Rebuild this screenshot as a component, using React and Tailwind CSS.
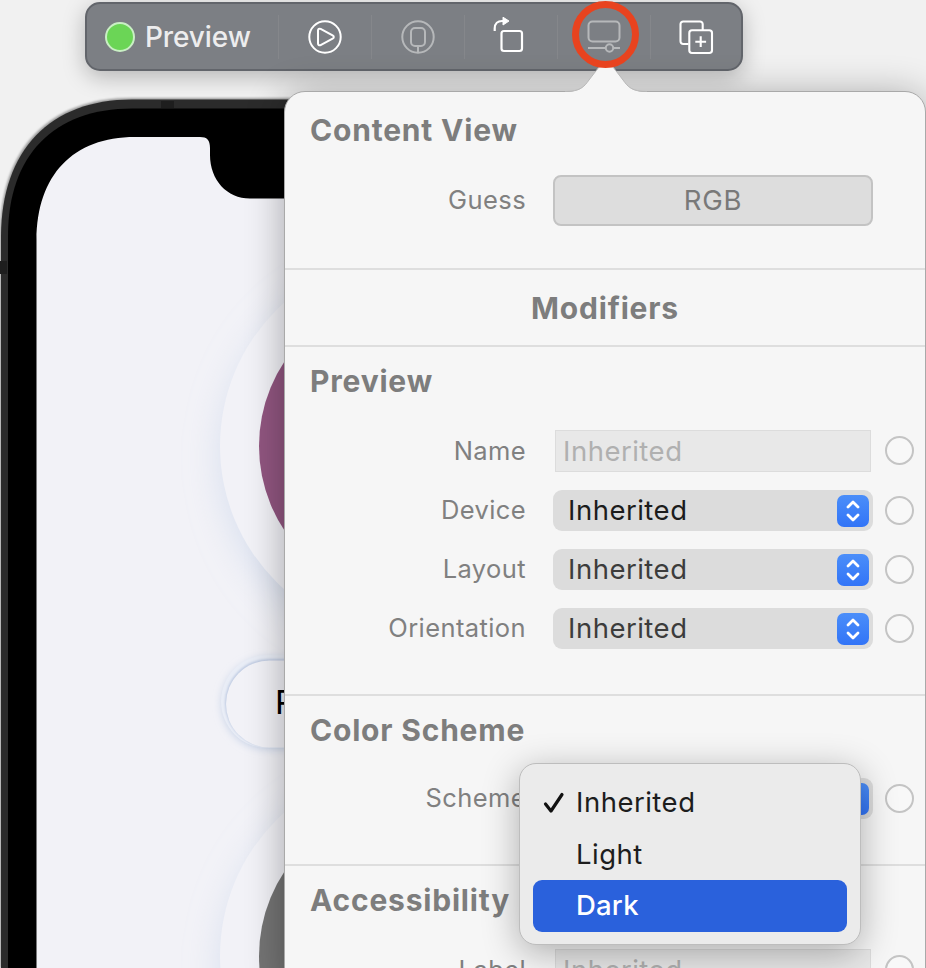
import React from "react";

function Phone() {
  return (
    <svg className="absolute inset-0" width="926" height="968" viewBox="0 0 926 968" fill="none">
      <defs>
        <filter id="soft" x="-30%" y="-30%" width="160%" height="160%">
          <feGaussianBlur stdDeviation="18" />
        </filter>
        <filter id="edge" x="-30%" y="-30%" width="160%" height="160%">
          <feGaussianBlur stdDeviation="4" />
        </filter>
        <filter id="hair" x="-10%" y="-10%" width="120%" height="120%">
          <feGaussianBlur stdDeviation="1" />
        </filter>
        <clipPath id="screen">
          <path d="M36.500 968V240C37 175 73 137 135 137H200C207 137 210 140 210 148V155C210 180 227 198.500 250 198.500H500V968Z" />
        </clipPath>
      </defs>
      <path d="M0 968V236C0 148 49 98 132 98H500V968Z" fill="#9a9a9a" filter="url(#hair)" />
      <path d="M1 968V236C1.500 150 50 99.500 132 99.500H500V968Z" fill="#2b2b2b" />
      <path d="M161 101h13v7h-13zM0 261h7v13H0z" fill="#1e1e1e" />
      <path d="M8 968V236C8 155 54 108.500 132 108.500H500V968Z" fill="#000" />
      <g clipPath="url(#screen)">
        <rect x="36" y="136" width="400" height="832" fill="#f2f2f7" />
        <circle cx="413" cy="458" r="191" fill="#bccbe6" fillOpacity=".52" filter="url(#soft)" />
        <circle cx="413" cy="968" r="191" fill="#bccbe6" fillOpacity=".52" filter="url(#soft)" />
        <circle cx="412" cy="446" r="192" fill="#f2f2f7" />
        <circle cx="412" cy="446" r="153" fill="#915680" />
        <circle cx="412" cy="956" r="192" fill="#f2f2f7" />
        <circle cx="412" cy="956" r="153" fill="#747474" />
        <rect x="222" y="658" width="382" height="91" rx="45.500" fill="#b9c8e2" fillOpacity=".8" filter="url(#edge)" />
        <rect x="221" y="655" width="382" height="93" rx="46.500" fill="#e9edf6" />
        <rect x="225" y="659" width="374" height="88" rx="44" fill="#bfcbe2" filter="url(#hair)" />
        <rect x="226" y="660.500" width="374" height="87" rx="43.500" fill="#f2f2f7" />
      </g>
      <text x="275" y="714" fontFamily="Inter, sans-serif" fontSize="33" fill="#000">R</text>
    </svg>
  );
}

function Divider() {
  return <span className="h-11 w-px shrink-0 bg-[#85878b]" />;
}

function Toolbar() {
  return (
    <div className="ml-[85px] flex h-[69px] w-[658px] items-center rounded-[15px] border-2 border-[#62656b] bg-[#7c7f84] shadow-[0_6px_22px_rgba(0,0,0,0.25)]">
      <div className="flex w-[191px] shrink-0 items-center pl-[18px]">
        <span className="size-[30px] shrink-0 rounded-full border-2 border-[#c9efc4] bg-[#6bd556]" />
        <span className="ml-[10px] whitespace-nowrap text-[28px] font-medium leading-9 tracking-[-0.1px] text-[#ededee]">Preview</span>
      </div>
      <Divider />
      <div className="flex w-[92px] shrink-0 justify-center">
        <svg width="36" height="36" viewBox="0 0 36 36" fill="none" stroke="#fff" strokeWidth="2" strokeLinejoin="round">
          <circle cx="18" cy="18" r="15.700" />
          <path d="M11 11.500c0-1.500 1.200-2.300 2.600-1.600l12 6.400c1.600.9 1.600 2.500 0 3.400l-12 6.400c-1.400.7-2.600-.1-2.600-1.600z" />
        </svg>
      </div>
      <Divider />
      <div className="flex w-[92px] shrink-0 justify-center">
        <svg width="36" height="36" viewBox="0 0 36 36" fill="none" stroke="#b6b8ba" strokeWidth="2">
          <circle cx="18" cy="18" r="15.700" />
          <rect x="11" y="9" width="14" height="18" rx="4" />
          <path d="M18 27v6" />
        </svg>
      </div>
      <Divider />
      <div className="flex w-[92px] shrink-0 justify-center">
        <svg width="42" height="42" viewBox="0 0 42 42" fill="none" stroke="#fff" strokeWidth="2.200">
          <rect x="11.500" y="15" width="20.500" height="20" rx="2.500" />
          <path d="M4.700 15v-2.500C4.700 7.500 8 5 12 5h2" />
          <path d="M13 1.200l6 3.800-6 4z" fill="#fff" strokeWidth="1" />
        </svg>
      </div>
      <Divider />
      <div className="flex w-[92px] shrink-0 justify-center">
        <svg width="36" height="36" viewBox="0 0 36 36" fill="none" stroke="#b6b8ba" strokeWidth="2">
          <rect x="2.500" y="2.500" width="31" height="20" rx="4" />
          <path d="M2 29h18M27.500 29H34" />
          <circle cx="23.500" cy="29" r="3.700" />
        </svg>
      </div>
      <Divider />
      <div className="flex flex-1 justify-center">
        <svg width="36" height="36" viewBox="0 0 36 36" fill="none" stroke="#fff" strokeWidth="2.100">
          <path d="M10.500 25H5.200A2.700 2.700 0 0 1 2.500 22.300V5.200A2.700 2.700 0 0 1 5.200 2.500H22A2.700 2.700 0 0 1 24.700 5.200V11" />
          <rect x="11.300" y="11.300" width="22.700" height="22.700" rx="2.700" />
          <path d="M22.700 17.300v10.800M17.300 22.700h10.800" />
        </svg>
      </div>
    </div>
  );
}

function Ring() {
  return <span className="-mt-px size-[29px] shrink-0 rounded-full border-2 border-[#c4c4c4] bg-[#f8f8f8]" />;
}

function Row({ label, children, ring = true }) {
  return (
    <div className="flex items-center">
      <span className="-mt-px w-[216px] shrink-0 text-right text-[25.5px] leading-8 tracking-[0.4px] text-[#808080]">{label}</span>
      <div className="ml-[27px] mr-[12px] w-[320px] shrink-0">{children}</div>
      {ring && <Ring />}
    </div>
  );
}

function Field() {
  return (
    <div className="ml-[2px] flex h-[42px] w-[316px] items-center border border-[#dcdcdc] bg-[#e8e8e8] pl-[7px] pt-[2px] text-[27.5px] tracking-[0.5px] text-[#b0b0b0]">
      Inherited
    </div>
  );
}

function Select({ dark, open }) {
  return (
    <div className="flex h-[41px] w-[320px] items-center justify-between rounded-[9px] bg-[#dcdcdc] pl-[15px] pr-[4px]">
      <span className={dark ? "text-[27.5px] tracking-[0.5px] text-[#1c1c1c]" : "text-[27.5px] tracking-[0.5px] text-[#3c3c3c]"}>
        {open ? null : "Inherited"}
      </span>
      <span className="flex h-[32px] w-[32px] items-center justify-center rounded-[7px] bg-gradient-to-b from-[#4b8ef9] to-[#3274f7]">
        <svg width="16" height="24" viewBox="0 0 16 24" fill="none" stroke="#fff" strokeWidth="2.800" strokeLinecap="round" strokeLinejoin="round">
          <path d="M3 8l5-5 5 5M3 16l5 5 5-5" />
        </svg>
      </span>
    </div>
  );
}

function Heading({ children }) {
  return <h2 className="whitespace-nowrap text-[30px] font-bold leading-9 tracking-[0.8px] text-[#7d7d7d]">{children}</h2>;
}

function Menu() {
  return (
    <div className="absolute left-[519px] top-[763px] flex h-[182px] w-[342px] flex-col rounded-[17px] border border-[#bdbdbd] bg-[#ebebeb] px-[13px] pt-[12px] text-[27.5px] tracking-[0.5px] text-[#1d1d1d] shadow-[0_8px_36px_rgba(0,0,0,0.3)]">
      <div className="flex h-[52px] items-center pt-[2px]">
        <svg className="ml-[9px] mr-[9px]" width="25" height="28" viewBox="0 0 25 28" fill="none" stroke="#111" strokeWidth="3.200" strokeLinecap="round" strokeLinejoin="round">
          <path d="M3.500 15l5.500 7L20 5.500" />
        </svg>
        Inherited
      </div>
      <div className="flex h-[52px] items-center pl-[43px] pt-[2px]">Light</div>
      <div className="flex h-[52px] shrink-0 items-center rounded-[9px] bg-[#2a61dc] pl-[43px] font-medium tracking-[0.2px] text-white">Dark</div>
    </div>
  );
}

function Popover() {
  return (
    <div className="relative ml-[284px] mt-[20px] h-[900px] w-[642px] rounded-[21px] border border-[#a9a9a9] bg-[#f6f6f6] shadow-[0_4px_38px_rgba(0,0,0,0.32)]">
      <svg className="absolute left-[280px] top-[-33px]" width="84" height="36" viewBox="0 0 84 36">
        <path d="M0 33C15 33 19 28 24 21L34 8Q41 1 48 8L58 21C63 28 67 33 82 33V36H0Z" fill="#f6f6f6" />
        <path d="M0 32.500C15 32.500 19 28 24 21L34 8M48 8L58 21C63 28 67 32.500 82 32.500" fill="none" stroke="#b8b8b8" strokeWidth="1" />
      </svg>
      <section className="h-[178px] border-b-2 border-[#dedede] pl-[25px] pt-[20px]">
        <Heading>Content View</Heading>
        <div className="mt-[27px]">
          <Row label="Guess" ring={false}>
            <div className="flex h-[51px] items-center justify-center rounded-[8px] border-2 border-[#c3c3c3] bg-[#dddddd] text-[27.5px] tracking-[0.7px] text-[#797979]">RGB</div>
          </Row>
        </div>
      </section>
      <section className="flex h-[77px] items-center justify-center border-b-2 border-[#dedede] pt-px">
        <Heading>Modifiers</Heading>
      </section>
      <section className="h-[349px] border-b-2 border-[#dedede] pl-[25px] pt-[16px]">
        <Heading>Preview</Heading>
        <div className="mt-[31px] flex flex-col gap-[18px]">
          <Row label="Name"><Field /></Row>
          <Row label="Device"><Select dark /></Row>
          <Row label="Layout"><Select /></Row>
          <Row label="Orientation"><Select /></Row>
        </div>
      </section>
      <section className="h-[170px] border-b-2 border-[#dedede] pl-[25px] pt-[16px]">
        <Heading>Color Scheme</Heading>
        <div className="mt-[30px]">
          <Row label="Scheme"><Select open /></Row>
        </div>
      </section>
      <section className="pl-[25px] pt-[16px]">
        <Heading>Accessibility</Heading>
        <div className="mt-[31px]">
          <Row label="Label"><Field /></Row>
        </div>
      </section>
    </div>
  );
}

export default function App() {
  return (
    <div className="relative h-[968px] w-[926px] overflow-hidden bg-[#f1f1f1] font-[Inter,sans-serif]">
      <Phone />
      <div className="relative pt-[2px]">
        <Toolbar />
        <Popover />
      </div>
      <div className="absolute left-[572px] top-[1px] size-[67px] rounded-full border-[7px] border-[#e8431f]" />
      <Menu />
    </div>
  );
}
